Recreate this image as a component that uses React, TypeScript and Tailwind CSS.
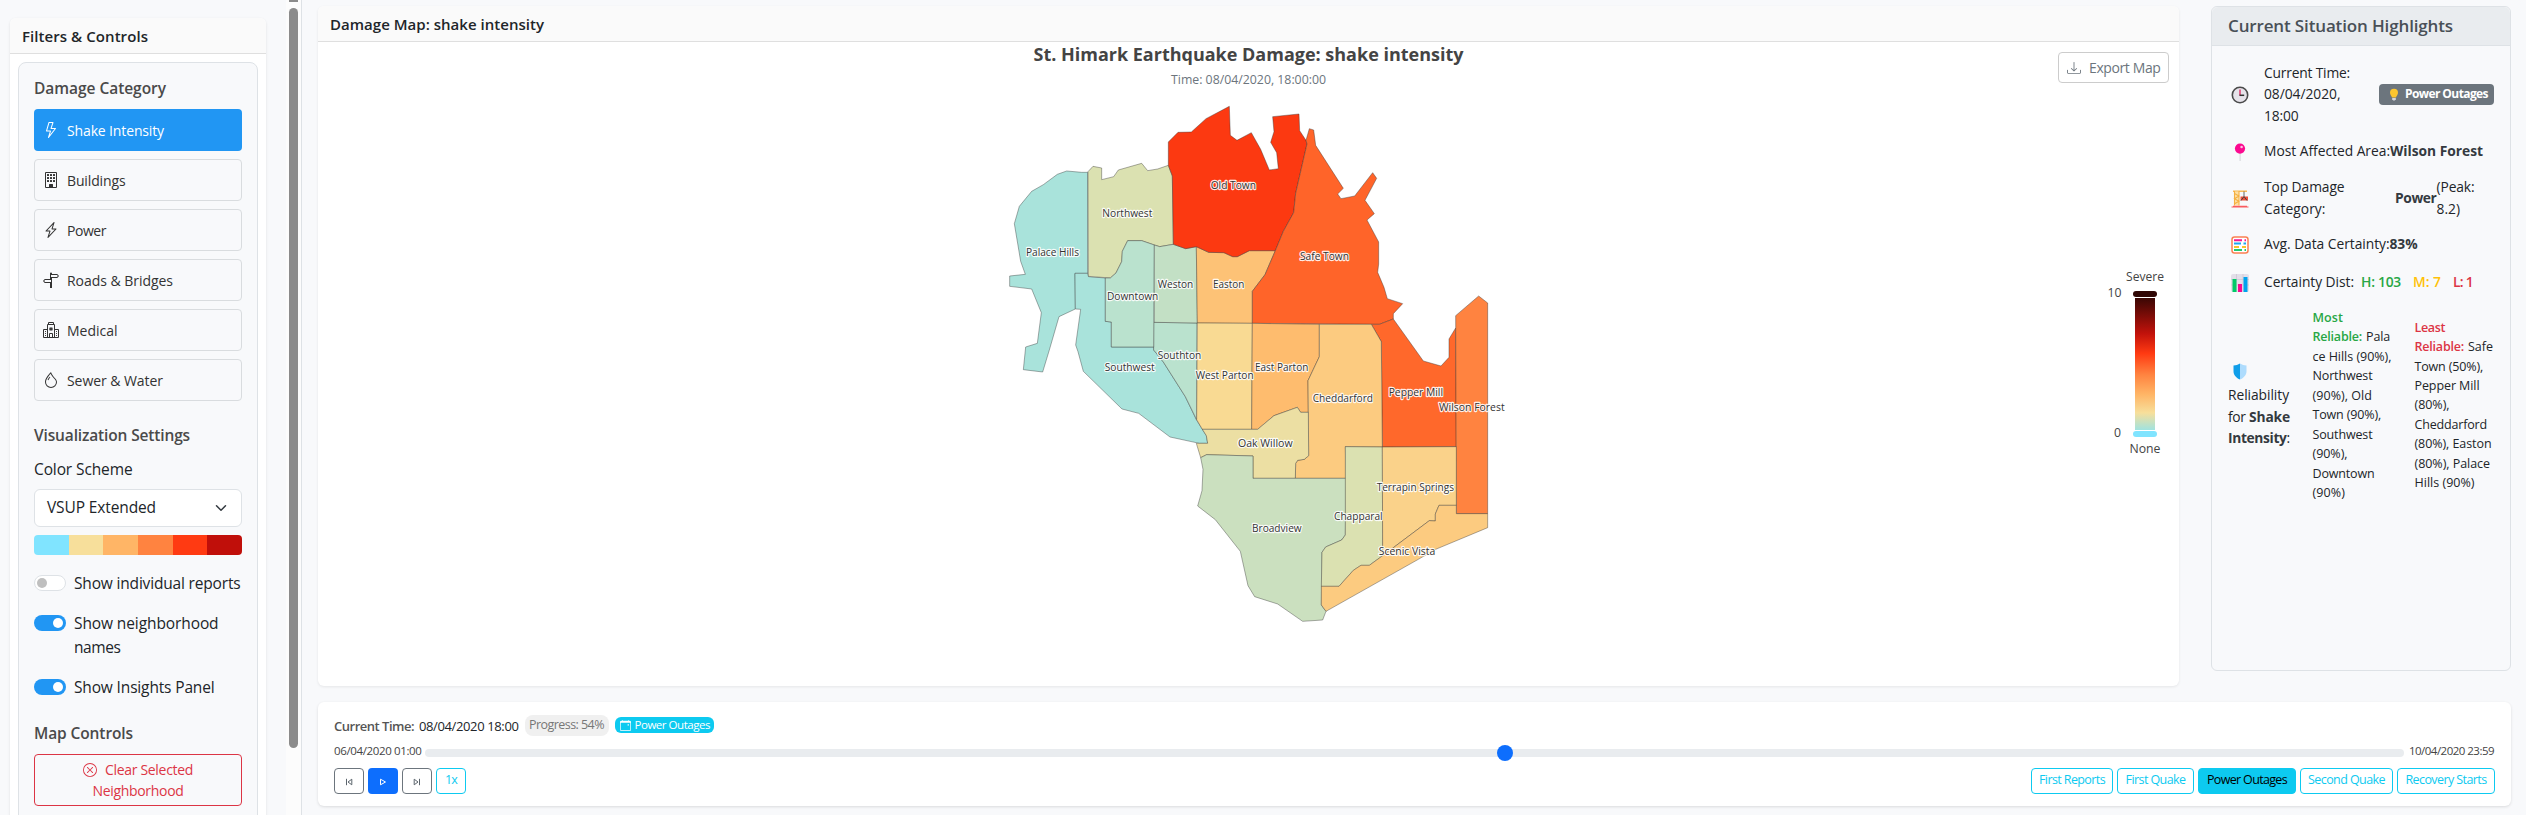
import { useLayoutEffect, useRef } from "react";
import type { ReactNode } from "react";
import {
  BsBuilding,
  BsCalendarEvent,
  BsDownload,
  BsDroplet,
  BsHospital,
  BsLightning,
  BsLightningCharge,
  BsSignpostSplit,
  BsXCircle,
} from "react-icons/bs";

/** Text run whose letter spacing is tuned so that it takes up `w` pixels. */
function Fit({ w, className = "", children }: { w: number; className?: string; children: string }) {
  const ref = useRef<HTMLSpanElement>(null);
  useLayoutEffect(() => {
    const el = ref.current;
    if (!el) return;
    const run = () => {
      el.style.letterSpacing = "0px";
      const natural = el.getBoundingClientRect().width;
      el.style.letterSpacing = `${(w - natural) / children.length}px`;
    };
    run();
    window.addEventListener("load", run);
    return () => window.removeEventListener("load", run);
  }, [w, children]);
  return (
    <span ref={ref} className={`inline-block whitespace-pre ${className}`}>
      {children}
    </span>
  );
}

const categories: { name: string; w: number; icon: ReactNode }[] = [
  { name: "Shake Intensity", w: 97, icon: <BsLightning /> },
  { name: "Buildings", w: 58.5, icon: <BsBuilding /> },
  { name: "Power", w: 39, icon: <BsLightningCharge /> },
  { name: "Roads & Bridges", w: 106, icon: <BsSignpostSplit /> },
  { name: "Medical", w: 50.5, icon: <BsHospital /> },
  { name: "Sewer & Water", w: 96, icon: <BsDroplet /> },
];

function Toggle({ on }: { on: boolean }) {
  return on ? (
    <span className="mt-1 flex h-4 w-8 shrink-0 items-center justify-end rounded-full bg-[#2196f3] px-[3px]">
      <span className="size-2.5 rounded-full bg-white" />
    </span>
  ) : (
    <span className="mt-1 flex h-4 w-8 shrink-0 items-center rounded-full border border-[#dee2e6] bg-white px-[2px]">
      <span className="size-2.5 rounded-full bg-[#bfbfbf]" />
    </span>
  );
}

function Sidebar() {
  return (
    <aside className="flex h-full w-[302px] shrink-0 border-r border-[#dee2e6]">
      <div className="h-full w-[286px] overflow-hidden pl-2.5 pt-[18px]">
        <div className="h-[900px] w-64 rounded-t-md bg-white shadow-[0_1px_3px_rgba(0,0,0,0.1)]">
          <div className="flex h-9 items-center rounded-t-md border-b border-[#dfdfdf] bg-[#fafafa] pl-3 pt-px text-[15px] font-semibold">
            <Fit w={126}>Filters &amp; Controls</Fit>
          </div>
          <div className="px-2 pt-2">
            <div className="h-[840px] rounded-lg border border-[#dee2e6] bg-[#f8f9fb] px-[15px] pt-[13px]">
              <div className="h-[33px] text-[15.5px] font-semibold leading-6 text-[#4a4a4a]">
                <Fit w={132}>Damage Category</Fit>
              </div>
              <div className="flex flex-col gap-2">
                {categories.map((c, i) => (
                  <div
                    key={c.name}
                    className={
                      i === 0
                        ? "flex h-[42px] items-center gap-2 rounded bg-[#2196f3] pl-[9px] text-sm font-medium text-white"
                        : "flex h-[42px] items-center gap-2 rounded border border-[#d9dcdf] pl-2 text-sm text-[#333]"
                    }
                  >
                    <span className="text-base">{c.icon}</span>
                    <span className="pt-px">
                      <Fit w={c.w}>{c.name}</Fit>
                    </span>
                  </div>
                ))}
              </div>
              <div className="mt-[22px] text-[15.5px] font-semibold leading-6 text-[#4a4a4a]">
                <Fit w={156}>Visualization Settings</Fit>
              </div>
              <div className="mt-[10px] text-[15.5px] leading-6">
                <Fit w={98.5}>Color Scheme</Fit>
              </div>
              <div className="mt-2 flex h-[38px] items-center justify-between rounded-md border border-[#dee2e6] bg-white pl-3 pr-3.5 text-[15.5px]">
                <Fit w={109}>VSUP Extended</Fit>
                <svg viewBox="0 0 16 16" className="size-3" fill="none" stroke="#343a40" strokeWidth="2" strokeLinecap="round" strokeLinejoin="round">
                  <path d="m2 5 6 6 6-6" />
                </svg>
              </div>
              <div className="mt-2 grid h-5 grid-cols-6 overflow-hidden rounded">
                <span className="bg-[#80e4ff]" />
                <span className="bg-[#f7df9b]" />
                <span className="bg-[#ffb566]" />
                <span className="bg-[#ff8340]" />
                <span className="bg-[#ff3a12]" />
                <span className="bg-[#c00f0a]" />
              </div>
              <div className="mt-4 flex gap-2 text-[15.5px] leading-6">
                <Toggle on={false} />
                <Fit w={166.5}>Show individual reports</Fit>
              </div>
              <div className="mt-4 flex gap-2 text-[15.5px] leading-6">
                <Toggle on />
                <div className="flex flex-col items-start">
                  <Fit w={144.5}>Show neighborhood</Fit>
                  <Fit w={46.5}>names</Fit>
                </div>
              </div>
              <div className="mt-4 flex gap-2 text-[15.5px] leading-6">
                <Toggle on />
                <Fit w={140.5}>Show Insights Panel</Fit>
              </div>
              <div className="mt-[22px] text-[15.5px] font-semibold leading-6 text-[#4a4a4a]">
                <Fit w={99}>Map Controls</Fit>
              </div>
              <div className="mt-[9px] flex h-[52px] flex-col items-center justify-center rounded border border-[#dc3545] text-sm leading-[21px] text-[#dc3545]">
                <div className="flex items-center gap-2">
                  <BsXCircle className="size-3.5" />
                  <Fit w={88}>Clear Selected</Fit>
                </div>
                <Fit w={91}>Neighborhood</Fit>
              </div>
            </div>
          </div>
        </div>
      </div>
      <div className="flex h-full w-[15px] flex-col items-center bg-[#fcfcfc]">
        <div className="h-0.5 w-[9px] bg-[#8b8b8b]" />
        <div className="mt-1.5 h-[740px] w-[9px] rounded-full bg-[#8b8b8b]" />
      </div>
    </aside>
  );
}

/* Neighborhood outlines, in thirds of a pixel from the top left of the map. */
const regions: { fill: string; pts: string }[] = [
  { fill: "#a9e3db", pts: "383,277 365,277 320,273 292,283 250,314 215,334 178,379 163,431 182,544 196,583 149,588 149,619 215,627 244,698 232,790 197,801 190,869 248,876 268,810 297,710 346,687 345,580 383,580" },
  { fill: "#a9e3db", pts: "345,580 383,580 386,590 436,594 436,724 454,726 454,801 581,801 581,810 610,846 676,950 709,1019 739,1067 743,1090 718,1090 630,1071 536,1000 486,987 370,874 354,815 347,795 362,688 346,687" },
  { fill: "#bae2ce", pts: "581,727 711,729 710,1019 676,950 610,846 581,810" },
  { fill: "#dbe1b1", pts: "384,275 399,259 425,264 425,299 461,290 475,270 545,250 563,272 593,267 625,256 637,288 640,493 599,500 583,495 545,482 503,482 487,514 485,545 468,579 451,594 385,589" },
  { fill: "#bae2ce", pts: "583,495 545,482 503,482 487,514 485,545 468,579 451,594 436,594 436,724 454,726 454,801 581,801" },
  { fill: "#c3e0c5", pts: "583,495 599,500 640,493 677,506 709,500 712,729 583,727" },
  { fill: "#fdc276", pts: "709,500 746,517 792,518 818,530 832,530 868,512 946,512 915,584 877,634 877,730 712,729" },
  { fill: "#fc3911", pts: "625,186 654,157 694,156 738,116 808,79 811,166 831,181 874,158 902,208 928,270 955,266 950,218 932,187 942,155 938,110 1017,102 1019,152 1038,181 1041,192 1007,340 1001,398 970,454 946,512 868,512 832,530 818,530 792,518 746,517 709,500 677,506 640,493 637,288 625,256" },
  { fill: "#ff6429", pts: "1038,181 1048,146 1061,150 1067,196 1150,325 1133,342 1143,356 1184,348 1238,278 1250,295 1215,361 1243,401 1221,420 1256,486 1256,552 1253,577 1272,622 1282,656 1328,671 1300,701 1300,717 1258,733 877,730 877,634 915,584 946,512 970,454 1001,398 1007,340 1041,192" },
  { fill: "#ff682b", pts: "1258,733 1300,717 1390,843 1443,858 1467,832 1467,777 1487,744 1489,1100 1267,1101 1264,785 1234,733" },
  { fill: "#ff8340", pts: "1487,707 1556,648 1583,669 1583,1301 1489,1301" },
  { fill: "#f9da93", pts: "712,729 877,730 875,1048 727,1048 710,1019" },
  { fill: "#febc6e", pts: "877,730 1078,733 1078,830 1044,902 1045,997 1022,997 1012,982 942,1007 893,1048 875,1048" },
  { fill: "#fccb80", pts: "1078,733 1234,733 1264,785 1267,1101 1156,1100 1158,1195 1006,1195 1007,1150 1013,1141 1033,1138 1046,1127 1044,902 1078,830" },
  { fill: "#ecdfa3", pts: "727,1048 893,1048 942,1007 1012,982 1022,997 1045,997 1046,1127 1033,1138 1013,1141 1007,1150 1006,1195 879,1195 879,1128 740,1124 722,1133 709,1090 743,1090 739,1067" },
  { fill: "#cbe0bf", pts: "722,1133 740,1124 879,1128 879,1195 1158,1195 1156,1365 1145,1380 1097,1401 1086,1417 1084,1575 1098,1594 1088,1620 1028,1624 953,1572 884,1550 864,1517 841,1414 766,1319 713,1278 726,1232 729,1168" },
  { fill: "#dbe1b1", pts: "1156,1100 1267,1101 1268,1427 1228,1456 1203,1456 1180,1471 1137,1519 1084,1519 1086,1417 1097,1401 1145,1380 1156,1365" },
  { fill: "#fad28a", pts: "1267,1101 1489,1100 1489,1276 1437,1276 1426,1302 1426,1323 1408,1322 1268,1427" },
  { fill: "#fccb80", pts: "1489,1276 1489,1301 1583,1301 1583,1343 1427,1408 1375,1438 1098,1594 1084,1575 1084,1519 1137,1519 1180,1471 1203,1456 1228,1456 1268,1427 1408,1322 1426,1323 1426,1302 1437,1276" },
];

/* name, left edge, right edge, baseline */
const labels: [string, number, number, number][] = [
  ["Palace Hills", 198, 357, 527],
  ["Northwest", 427, 577, 410],
  ["Old Town", 752, 888, 326],
  ["Weston", 593, 700, 623],
  ["Easton", 759, 853, 623],
  ["Downtown", 441, 595, 659],
  ["Southton", 593, 724, 836],
  ["Safe Town", 1020, 1167, 539],
  ["Southwest", 434, 584, 872],
  ["West Parton", 707, 881, 897],
  ["East Parton", 885, 1045, 872],
  ["Cheddarford", 1058, 1239, 965],
  ["Pepper Mill", 1286, 1449, 948],
  ["Wilson Forest", 1437, 1634, 992],
  ["Oak Willow", 834, 998, 1100],
  ["Terrapin Springs", 1250, 1482, 1232],
  ["Chapparal", 1122, 1268, 1319],
  ["Broadview", 876, 1025, 1355],
  ["Scenic Vista", 1256, 1426, 1424],
];

function DamageMap() {
  return (
    <svg viewBox="318 42 1861 645" className="block h-[645px] w-[1861px]">
      <defs>
        <linearGradient id="scale" x1="0" y1="0" x2="0" y2="1">
          <stop offset="0" stopColor="#3a0704" />
          <stop offset="0.27" stopColor="#c2120b" />
          <stop offset="0.42" stopColor="#ff3a12" />
          <stop offset="0.58" stopColor="#ff8340" />
          <stop offset="0.73" stopColor="#ffb566" />
          <stop offset="0.87" stopColor="#f7df9b" />
          <stop offset="1" stopColor="#a0e3e0" />
        </linearGradient>
      </defs>
      <text x="1033.5" y="61" fontSize="18.5" fontWeight="700" fill="#444" textLength="430" lengthAdjust="spacingAndGlyphs">
        St. Himark Earthquake Damage: shake intensity
      </text>
      <text x="1171" y="84" fontSize="12.5" fill="#6c757d" textLength="155" lengthAdjust="spacingAndGlyphs">
        Time: 08/04/2020, 18:00:00
      </text>
      <g transform="translate(960 80) scale(0.333333)">
        {regions.map((r, i) => (
          <polygon key={i} points={r.pts} fill={r.fill} stroke="#333" strokeOpacity="0.5" strokeWidth="2.4" />
        ))}
        {labels.map(([name, x0, x1, y]) => (
          <text
            key={name}
            x={x0}
            y={y}
            fontSize="31.5"
            fill="#333"
            stroke="#fff"
            strokeOpacity="0.9"
            strokeWidth="7"
            strokeLinejoin="round"
            paintOrder="stroke"
            textLength={x1 - x0}
            lengthAdjust="spacingAndGlyphs"
          >
            {name}
          </text>
        ))}
      </g>
      <rect x="2133" y="291" width="24" height="6" rx="3" fill="#2f0604" />
      <rect x="2135" y="298" width="20" height="132" fill="url(#scale)" />
      <rect x="2133" y="431" width="24" height="6" rx="3" fill="#80e4ff" />
      <g fill="#444" fontSize="12.5">
        <text x="2126" y="281" textLength="38" lengthAdjust="spacingAndGlyphs">Severe</text>
        <text x="2107.5" y="297" textLength="14" lengthAdjust="spacingAndGlyphs">10</text>
        <text x="2114" y="437" textLength="7" lengthAdjust="spacingAndGlyphs">0</text>
        <text x="2129.5" y="453" textLength="31" lengthAdjust="spacingAndGlyphs">None</text>
      </g>
    </svg>
  );
}

function ClockIcon() {
  return (
    <svg viewBox="0 0 18 18" className="size-[18px]" fill="none">
      <circle cx="9" cy="9" r="7.7" fill="#e6e3ea" stroke="#4a4a4a" strokeWidth="1.6" />
      <path d="M9 3.5v6" stroke="#e0245e" strokeWidth="1.3" />
      <path d="M8.5 9.3h4.7" stroke="#333" strokeWidth="1.5" />
    </svg>
  );
}

function PinIcon() {
  return (
    <svg viewBox="0 0 18 18" className="size-[18px]">
      <path d="M8.6 9h1v9h-1z" fill="#d3d3d8" />
      <circle cx="9" cy="5.6" r="5.1" fill="#fb0a90" />
      <circle cx="10.6" cy="4" r="1.3" fill="#ffc4e2" />
    </svg>
  );
}

function CraneIcon() {
  return (
    <svg viewBox="0 0 18 18" className="size-[18px]" fill="none">
      <path d="M2 1.2h14" stroke="#f8b03c" strokeWidth="1.3" />
      <path d="M3.500 1.500h4.500v14H3.500z" fill="#fde0a4" />
      <path d="M3.500 1v14.500M8 1v14.500M3.500 3.500 8 6 3.500 8.700 8 11.200l-4.500 2.600" stroke="#f5b041" strokeWidth="1.100" />
      <path d="M13 1.500v5" stroke="#555" strokeWidth="0.900" />
      <path d="M9.500 6.500h7.500v4H9.500z" fill="#f0503a" />
      <path d="m10 10.500 3-4 3 4" stroke="#444" strokeWidth="1" />
      <path d="M2 15.700h14v.8h1.500v1H.5v-1H2z" fill="#f95b5f" />
    </svg>
  );
}

function AbacusIcon() {
  return (
    <svg viewBox="0 0 18 18" className="size-[18px]" fill="none">
      <rect x="1" y="1" width="16" height="16" rx="2.500" fill="#fff" stroke="#fa8052" strokeWidth="1.500" />
      <path d="M3 4.300h8M13.500 4.300h1.500" stroke="#f5168f" strokeWidth="2" />
      <path d="M3 7.600h7M12.500 7.600H15" stroke="#1ba8f0" strokeWidth="2" />
      <path d="M3 10.900h5M11 10.900h4" stroke="#f8c32c" strokeWidth="2" />
      <path d="M3 14.100h8M13.500 14.100h1.500" stroke="#22c770" strokeWidth="2" />
    </svg>
  );
}

function ChartIcon() {
  return (
    <svg viewBox="0 0 18 18" className="size-[18px]">
      <rect width="18" height="18" rx="2" fill="#e3dfe9" />
      <path d="M0 5.500h18M0 11h18M5.500 0v18M12 0v18" stroke="#cbc5d3" strokeWidth="0.7" />
      <path d="M1.500 5h4v13h-4z" fill="#00cb68" />
      <path d="M7 10h4v8H7z" fill="#f90a90" />
      <path d="M12.500 3h4v15h-4z" fill="#00a3ee" />
    </svg>
  );
}

function ShieldIcon() {
  return (
    <svg viewBox="0 0 14 17" className="h-[17px] w-3.5">
      <path d="M7 .5C5 1.800 3 2.300.5 2.500v5.700c0 4 3 6.800 6.500 8.300z" fill="#109ee9" />
      <path d="M7 .5c2 1.300 4 1.800 6.500 2v5.700c0 4-3 6.800-6.500 8.300z" fill="#aedcfd" />
    </svg>
  );
}

function BulbIcon() {
  return (
    <svg viewBox="0 0 10 13" className="h-[13px] w-2.5 shrink-0">
      <path d="M5 .7a4 4 0 0 0-4 4c0 2 1.500 2.800 2 4.800h4c.5-2 2-2.800 2-4.800a4 4 0 0 0-4-4z" fill="#fcc62f" />
      <path d="M3.200 10h3.600v1.300L5.800 12.500H4.200l-1-1.200z" fill="#d5d5da" />
    </svg>
  );
}

const mostReliable: [string, number][] = [
  ["ce Hills (90%),", 79],
  ["Northwest", 60],
  ["(90%), Old", 59.5],
  ["Town (90%),", 68.5],
  ["Southwest", 60],
  ["(90%),", 35],
  ["Downtown", 62],
  ["(90%)", 32.5],
];

const leastReliable: [string, number][] = [
  ["Town (50%),", 68.5],
  ["Pepper Mill", 65],
  ["(80%),", 35],
  ["Cheddarford", 72.5],
  ["(80%), Easton", 77],
  ["(80%), Palace", 75.5],
  ["Hills (90%)", 60],
];

function Highlights() {
  return (
    <section className="h-[665px] w-[300px] shrink-0 rounded-md border border-[#dee2e6] bg-[#f8f9fb]">
      <div className="flex h-[39px] items-center rounded-t-md border-b border-[#dee2e6] bg-[#e9ecef] pl-4 text-[17px] font-semibold text-[#495057]">
        <Fit w={225}>Current Situation Highlights</Fit>
      </div>
      <div className="pl-4 pr-4 pt-[15px] text-[13.8px] leading-[21.4px]">
        <div className="flex h-[66px] items-center">
          <div className="w-9 pl-[3px] pt-0.5">
            <ClockIcon />
          </div>
          <div className="flex w-[115px] flex-col items-start">
            <Fit w={86}>Current Time:</Fit>
            <Fit w={76.5}>08/04/2020,</Fit>
            <Fit w={34.5}>18:00</Fit>
          </div>
          <div className="flex h-[21px] w-[115px] items-center gap-[6px] rounded bg-[#6c757d] pl-[10px] text-[12px] font-bold leading-none text-white">
            <BulbIcon />
            <Fit w={83}>Power Outages</Fit>
          </div>
        </div>
        <div className="mt-[13px] flex h-[21px] items-center">
          <div className="w-9 pl-[3px] pt-0.5">
            <PinIcon />
          </div>
          <Fit w={126}>Most Affected Area:</Fit>
          <Fit w={93} className="font-bold text-[#343a40]">Wilson Forest</Fit>
        </div>
        <div className="mt-[15px] flex h-[43px] items-center">
          <div className="w-9 pl-[3px] pt-0.5">
            <CraneIcon />
          </div>
          <div className="flex w-[131px] flex-col items-start">
            <Fit w={80.5}>Top Damage</Fit>
            <Fit w={61.5}>Category:</Fit>
          </div>
          <Fit w={41.5} className="font-bold text-[#343a40]">Power</Fit>
          <div className="flex flex-col items-start">
            <Fit w={38}>(Peak:</Fit>
            <Fit w={23.5}>8.2)</Fit>
          </div>
        </div>
        <div className="mt-[14px] flex h-[21px] items-center">
          <div className="w-9 pl-[3px] pt-0.5">
            <AbacusIcon />
          </div>
          <Fit w={125.5}>Avg. Data Certainty:</Fit>
          <Fit w={28} className="font-bold text-[#343a40]">83%</Fit>
        </div>
        <div className="mt-[17px] flex h-[21px] items-center">
          <div className="w-9 pl-[3px] pt-0.5">
            <ChartIcon />
          </div>
          <Fit w={90}>Certainty Dist:</Fit>
          <Fit w={40} className="ml-[7px] font-semibold text-[#28a745]">H: 103</Fit>
          <Fit w={28} className="ml-3 font-semibold text-[#ffc107]">M: 7</Fit>
          <Fit w={20} className="ml-3 font-semibold text-[#dc3545]">L: 1</Fit>
        </div>
        <div className="mt-4 flex items-center">
          <div className="flex w-[84.5px] flex-col items-start">
            <div className="flex h-[18px] items-center pl-[5px] pt-0.5">
              <ShieldIcon />
            </div>
            <div className="h-[4.5px]" />
            <Fit w={61}>Reliability</Fit>
            <div className="flex">
              <Fit w={21}>for </Fit>
              <Fit w={41} className="font-bold text-[#343a40]">Shake</Fit>
            </div>
            <div className="flex">
              <Fit w={58.5} className="font-bold text-[#343a40]">Intensity</Fit>
              <span>:</span>
            </div>
          </div>
          <div className="flex w-[102px] flex-col items-start text-[12.5px] leading-[19.44px]">
            <Fit w={30.5} className="font-semibold text-[#28a745]">Most</Fit>
            <div className="flex">
              <Fit w={49.5} className="font-semibold text-[#28a745]">Reliable:</Fit>
              <Fit w={24} className="ml-1">Pala</Fit>
            </div>
            {mostReliable.map(([t, w], i) => (
              <Fit key={i} w={w}>{t}</Fit>
            ))}
          </div>
          <div className="flex flex-col items-start text-[12.5px] leading-[19.44px]">
            <Fit w={30.5} className="font-semibold text-[#dc3545]">Least</Fit>
            <div className="flex">
              <Fit w={49.5} className="font-semibold text-[#dc3545]">Reliable:</Fit>
              <Fit w={25} className="ml-1">Safe</Fit>
            </div>
            {leastReliable.map(([t, w], i) => (
              <Fit key={i} w={w}>{t}</Fit>
            ))}
          </div>
        </div>
      </div>
    </section>
  );
}

function Timeline() {
  const event = "flex h-[26px] items-center justify-center rounded border border-[#0dcaf0] pb-px text-[12.5px]";
  return (
    <section className="h-[104px] rounded-md bg-white px-4 pt-[13px] shadow-[0_1px_3px_rgba(0,0,0,0.12)]">
      <div className="flex h-[21px] items-center text-[13px]">
        <Fit w={80} className="pt-[2px] font-semibold text-[#555]">Current Time:</Fit>
        <Fit w={99.5} className="ml-[5px] pt-[2px]">08/04/2020 18:00</Fit>
        <div className="ml-[6px] flex h-[21px] w-[84px] items-center justify-center rounded-lg bg-[#f0f0f0] text-[12.5px] text-[#777]">
          <Fit w={75}>Progress: 54%</Fit>
        </div>
        <div className="ml-1.5 mt-[-1px] flex h-4 w-[99px] items-center gap-1 rounded-md bg-[#0dcaf0] pl-[5px] text-[11.5px] font-medium leading-none text-white">
          <BsCalendarEvent className="size-[11px]" />
          <Fit w={75.5}>Power Outages</Fit>
        </div>
      </div>
      <div className="mt-[7px] flex h-4 items-center text-[11.5px] text-[#444]">
        <Fit w={87.5}>06/04/2020 01:00</Fit>
        <div className="relative ml-[3.5px] mt-1 h-2 w-[1979px] rounded-full bg-[#e9ecef]">
          <div className="absolute left-[1072px] top-[-4px] size-4 rounded-full bg-[#0d6efd]" />
        </div>
        <Fit w={85} className="ml-[5px]">10/04/2020 23:59</Fit>
      </div>
      <div className="mt-[9px] flex justify-between">
        <div className="flex gap-1">
          <div className="flex h-[26px] w-[30px] items-center justify-center rounded border border-[#6c757d]">
            <svg viewBox="0 0 8 8" className="mt-0.5 size-2" fill="none" stroke="#5c656d" strokeWidth="1">
              <path d="M1.500 .8v6.400M6.800 1.200v5.600L3 4z" />
            </svg>
          </div>
          <div className="flex h-[26px] w-[30px] items-center justify-center rounded bg-[#0d6efd]">
            <svg viewBox="0 0 8 8" className="mt-0.5 size-2" fill="none" stroke="#fff" strokeWidth="1">
              <path d="M1.500 1.200v5.600L6.500 4z" />
            </svg>
          </div>
          <div className="flex h-[26px] w-[30px] items-center justify-center rounded border border-[#6c757d]">
            <svg viewBox="0 0 8 8" className="mt-0.5 size-2" fill="none" stroke="#5c656d" strokeWidth="1">
              <path d="M6.500 .8v6.400M1.200 1.200v5.600L5 4z" />
            </svg>
          </div>
          <div className={`${event} w-[30px] text-[#0dcaf0]`}>
            <Fit w={12}>1x</Fit>
          </div>
        </div>
        <div className="flex gap-1">
          <div className={`${event} w-[82px] text-[#0dcaf0]`}>
            <Fit w={66}>First Reports</Fit>
          </div>
          <div className={`${event} w-[77px] text-[#0dcaf0]`}>
            <Fit w={60}>First Quake</Fit>
          </div>
          <div className={`${event} w-[98px] bg-[#0dcaf0] text-black`}>
            <Fit w={80}>Power Outages</Fit>
          </div>
          <div className={`${event} w-[93px] text-[#0dcaf0]`}>
            <Fit w={77}>Second Quake</Fit>
          </div>
          <div className={`${event} w-[98px] text-[#0dcaf0]`}>
            <Fit w={81}>Recovery Starts</Fit>
          </div>
        </div>
      </div>
    </section>
  );
}

export default function App() {
  return (
    <div className="flex h-[815px] w-[2526px] overflow-hidden bg-[#f8f9fb] font-['Open_Sans','Noto_Sans',sans-serif] text-[#212529]">
      <Sidebar />
      <main className="flex flex-1 flex-col gap-4 pl-4 pr-[15px] pt-1.5">
        <div className="flex h-[680px] justify-between">
          <section className="relative h-[680px] w-[1861px] rounded-md bg-white shadow-[0_1px_3px_rgba(0,0,0,0.08)]">
            <div className="flex h-9 items-center rounded-t-md border-b border-[#dfdfdf] bg-[#fafafa] pl-3 pt-px text-[15px] font-semibold">
              <Fit w={214}>Damage Map: shake intensity</Fit>
            </div>
            <DamageMap />
            <div className="absolute right-2.5 top-[46px] flex h-[31px] w-[111px] items-center gap-2 rounded border border-[#ccc] bg-white pl-2 text-sm text-[#6c757d]">
              <BsDownload className="size-3.5" />
              <Fit w={71.5}>Export Map</Fit>
            </div>
          </section>
          <Highlights />
        </div>
        <Timeline />
      </main>
    </div>
  );
}
